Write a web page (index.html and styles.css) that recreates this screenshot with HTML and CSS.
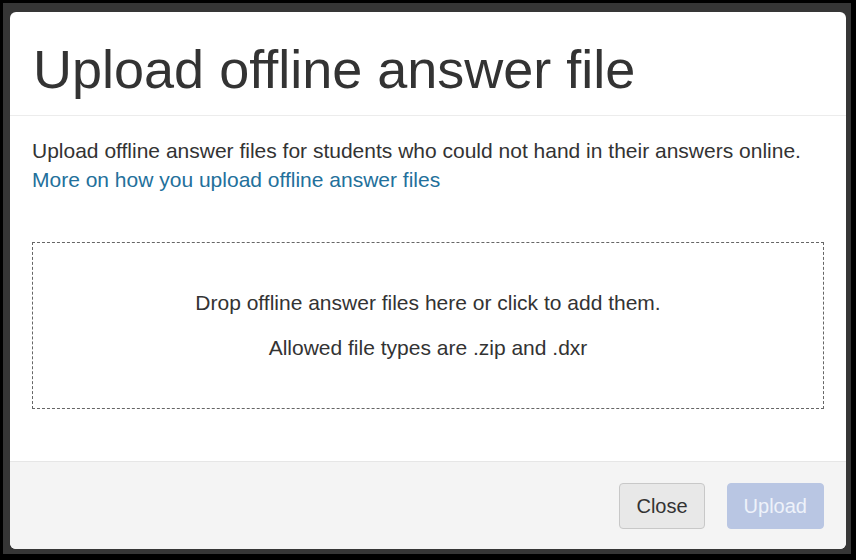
FILE: index.html
```html
<!DOCTYPE html>
<html lang="en">
<head>
  <meta charset="UTF-8" />
  <title>Upload offline answer file</title>
  <link rel="stylesheet" href="styles.css">
</head>
<body>
  <div class="frame">
    <div class="modal">
      <header class="modal-header">
        <h1>Upload offline answer file</h1>
      </header>
      <div class="modal-body">
        <p class="intro">Upload offline answer files for students who could not hand in their answers online.</p>
        <a class="help" href="#">More on how you upload offline answer files</a>
        <div class="dropzone">
          <p>Drop offline answer files here or click to add them.</p>
          <p>Allowed file types are .zip and .dxr</p>
        </div>
      </div>
      <footer class="modal-footer">
        <button class="btn">Close</button>
        <button class="btn btn-primary" disabled>Upload</button>
      </footer>
    </div>
  </div>
</body>
</html>
```

FILE: styles.css
```css
* {
  box-sizing: border-box;
  margin: 0;
  padding: 0;
  font-family: "Liberation Sans", Arial, sans-serif;
}
body {
  background: #000;
  width: 856px;
  height: 560px;
  overflow: hidden;
}
.frame {
  margin: 3px;
  width: 848px;
  height: 551px;
  padding: 9px 5px 5px 7px;
  background: #363636;
}
.modal {
  display: flex;
  flex-direction: column;
  height: 537px;
  background: #fff;
  border-radius: 6px;
  overflow: hidden;
  color: #333;
}
.modal-header {
  height: 104px;
  padding: 0 23px;
  border-bottom: 1px solid #ececec;
  display: flex;
  align-items: center;
}
.modal-header h1 {
  font-size: 54px;
  font-weight: normal;
  line-height: 1;
  padding-top: 10px;
}
.modal-body {
  flex: 1;
  padding: 20px 22px;
  font-size: 21px;
  line-height: 29px;
}
.help {
  color: #23709b;
  text-decoration: none;
}
.dropzone {
  margin-top: 48px;
  height: 167px;
  border: 1px dashed #666;
  padding-top: 47px;
  text-align: center;
  font-size: 21px;
  line-height: 26px;
}
.dropzone p + p {
  margin-top: 19px;
}
.modal-footer {
  display: flex;
  justify-content: flex-end;
  gap: 22px;
  padding: 21px 22px 20px;
  background: #f4f4f4;
  border-top: 1px solid #e6e6e6;
}
.btn {
  height: 46px;
  padding: 0 16px;
  font-size: 20px;
  color: #333;
  background: #e8e8e8;
  border: 1px solid #c8c8c8;
  border-radius: 4px;
  cursor: pointer;
}
.btn-primary {
  color: #eef2fa;
  background: #b9c6e3;
  border-color: #b9c6e3;
  cursor: default;
}
```
